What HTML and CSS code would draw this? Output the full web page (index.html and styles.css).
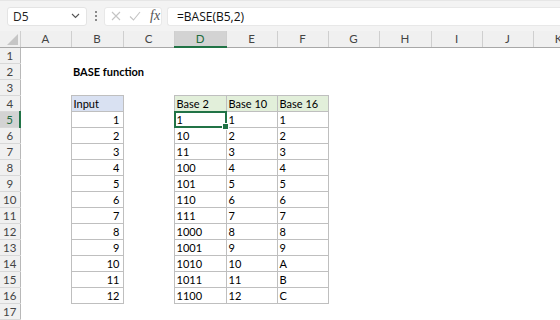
FILE: index.html
```html
<!DOCTYPE html>
<html>
<head>
<meta charset="utf-8">
<link rel="stylesheet" href="styles.css">
</head>
<body>
<div class="toolbar">
  <div class="namebox"><span>D5</span>
    <svg class="chev" width="9" height="6" viewBox="0 0 9 6"><path d="M1 1l3.5 3.5L8 1" fill="none" stroke="#555" stroke-width="1.1"/></svg>
  </div>
  <div class="dots"><i></i><i></i><i></i></div>
  <div class="fxbox">
    <svg width="10" height="10" viewBox="0 0 10 10"><path d="M1 1l8 8M9 1l-8 8" stroke="#c4c4c4" stroke-width="1.1" fill="none"/></svg>
    <svg width="12" height="10" viewBox="0 0 12 10"><path d="M1 5.5l3.5 3.5L11 1" stroke="#c4c4c4" stroke-width="1.1" fill="none"/></svg>
    <span class="fx">fx</span>
  </div>
  <div class="formula">=BASE(B5,2)</div>
</div>
<div class="sheet">
<table class="grid">
  <colgroup>
    <col class="c-rh"><col class="c51"><col class="c52"><col class="c51"><col class="c52"><col class="c51"><col class="c51"><col class="c51"><col class="c52"><col class="c51"><col class="c51"><col class="c51">
  </colgroup>
  <tr class="hdr">
    <td class="corner"><span class="tri"></span></td><td>A</td><td>B</td><td>C</td><td class="hsel">D</td><td>E</td><td>F</td><td>G</td><td>H</td><td>I</td><td>J</td><td>K</td>
  </tr>
  <tr><td class="rh">1</td><td></td><td></td><td></td><td></td><td></td><td></td><td></td><td></td><td></td><td></td><td></td></tr>
  <tr><td class="rh">2</td><td></td><td class="title">BASE function</td><td></td><td></td><td></td><td></td><td></td><td></td><td></td><td></td><td></td></tr>
  <tr><td class="rh">3</td><td></td><td></td><td></td><td></td><td></td><td></td><td></td><td></td><td></td><td></td><td></td></tr>
  <tr><td class="rh">4</td><td></td><td class="bx blue">Input</td><td></td><td class="bx green">Base 2</td><td class="bx green">Base 10</td><td class="bx green">Base 16</td><td></td><td></td><td></td><td></td><td></td></tr>
  <tr><td class="rh rsel">5</td><td></td><td class="bx num">1</td><td></td><td class="bx act">1<div class="sel"><span class="handle"></span></div></td><td class="bx">1</td><td class="bx">1</td><td></td><td></td><td></td><td></td><td></td></tr>
  <tr><td class="rh">6</td><td></td><td class="bx num">2</td><td></td><td class="bx">10</td><td class="bx">2</td><td class="bx">2</td><td></td><td></td><td></td><td></td><td></td></tr>
  <tr><td class="rh">7</td><td></td><td class="bx num">3</td><td></td><td class="bx">11</td><td class="bx">3</td><td class="bx">3</td><td></td><td></td><td></td><td></td><td></td></tr>
  <tr><td class="rh">8</td><td></td><td class="bx num">4</td><td></td><td class="bx">100</td><td class="bx">4</td><td class="bx">4</td><td></td><td></td><td></td><td></td><td></td></tr>
  <tr><td class="rh">9</td><td></td><td class="bx num">5</td><td></td><td class="bx">101</td><td class="bx">5</td><td class="bx">5</td><td></td><td></td><td></td><td></td><td></td></tr>
  <tr><td class="rh">10</td><td></td><td class="bx num">6</td><td></td><td class="bx">110</td><td class="bx">6</td><td class="bx">6</td><td></td><td></td><td></td><td></td><td></td></tr>
  <tr><td class="rh">11</td><td></td><td class="bx num">7</td><td></td><td class="bx">111</td><td class="bx">7</td><td class="bx">7</td><td></td><td></td><td></td><td></td><td></td></tr>
  <tr><td class="rh">12</td><td></td><td class="bx num">8</td><td></td><td class="bx">1000</td><td class="bx">8</td><td class="bx">8</td><td></td><td></td><td></td><td></td><td></td></tr>
  <tr><td class="rh">13</td><td></td><td class="bx num">9</td><td></td><td class="bx">1001</td><td class="bx">9</td><td class="bx">9</td><td></td><td></td><td></td><td></td><td></td></tr>
  <tr><td class="rh">14</td><td></td><td class="bx num">10</td><td></td><td class="bx">1010</td><td class="bx">10</td><td class="bx">A</td><td></td><td></td><td></td><td></td><td></td></tr>
  <tr><td class="rh">15</td><td></td><td class="bx num">11</td><td></td><td class="bx">1011</td><td class="bx">11</td><td class="bx">B</td><td></td><td></td><td></td><td></td><td></td></tr>
  <tr><td class="rh">16</td><td></td><td class="bx num">12</td><td></td><td class="bx">1100</td><td class="bx">12</td><td class="bx">C</td><td></td><td></td><td></td><td></td><td></td></tr>
  <tr><td class="rh">17</td><td></td><td></td><td></td><td></td><td></td><td></td><td></td><td></td><td></td><td></td><td></td></tr>
</table>
</div>
</body>
</html>
```
FILE: styles.css
```css
html, body {
  margin: 0;
  padding: 0;
  background: #fff;
}
body {
  width: 560px;
  height: 320px;
  overflow: hidden;
  font-family: Lato, "Liberation Sans", sans-serif;
}
.toolbar {
  display: flex;
  align-items: center;
  height: 31px;
  box-sizing: border-box;
  padding-left: 7px;
  background: #f3f3f3;
  border-top: 1px solid #e6e6e6;
}
.namebox {
  width: 80px;
  height: 19px;
  box-sizing: border-box;
  background: #fff;
  border: 1px solid #e4e4e4;
  border-radius: 3px;
  display: flex;
  align-items: center;
  justify-content: space-between;
  padding: 0 6px 0 5px;
  font: 12px "Open Sans", sans-serif;
  color: #222;
}
.dots {
  width: 17px;
  display: flex;
  flex-direction: column;
  align-items: center;
  gap: 2px;
}
.dots i {
  width: 2px;
  height: 2px;
  background: #8a8a8a;
}
.fxbox {
  width: 58px;
  height: 19px;
  box-sizing: border-box;
  background: #fff;
  border: 1px solid #e8e8e8;
  border-radius: 3px;
  display: flex;
  align-items: center;
  padding-left: 6px;
  gap: 8px;
}
.fx {
  font: italic 14px "Liberation Serif", serif;
  color: #555;
  margin-left: 1px;
}
.formula {
  flex: 1;
  height: 19px;
  margin-left: 5px;
  box-sizing: border-box;
  background: #fff;
  border: 1px solid #e8e8e8;
  border-right: 0;
  border-radius: 3px 0 0 3px;
  padding-left: 9px;
  font: 12px "Open Sans", sans-serif;
  line-height: 17px;
  color: #111;
}
.sheet {
  width: 560px;
  overflow: hidden;
}
.grid {
  border-collapse: collapse;
  table-layout: fixed;
  width: 584px;
}
.c-rh { width: 20px; }
.c51 { width: 51px; }
.c52 { width: 52px; }
.grid td {
  height: 15px;
  padding: 0 2px 0 2px;
  font-size: 11px;
  line-height: 15px;
  white-space: nowrap;
  color: #000;
  overflow: visible;
}
.hdr td {
  background: #f0f0f0;
  text-align: center;
  color: #444;
  font-size: 11.5px;
  border-right: 1px solid #cfcfcf;
  border-bottom: 1px solid #a8a8a8;
}
.hdr td.hsel {
  background: #d3d3d3;
  color: #1e6b40;
  border-bottom: 2px solid #217346;
}
.corner {
  position: relative;
}
.tri {
  position: absolute;
  right: 2px;
  bottom: 2px;
  width: 0;
  height: 0;
  border-left: 11px solid transparent;
  border-bottom: 11px solid #c6c6c6;
}
.grid td.rh {
  background: #f0f0f0;
  text-align: center;
  color: #444;
  font-size: 11.5px;
  padding: 0;
  border-right: 1px solid #b8b8b8;
  border-bottom: 1px solid #d8d8d8;
}
.grid td.rsel {
  background: #d3d3d3;
  color: #1e6b40;
  border-right: 2px solid #217346;
}
.title {
  font-weight: bold;
}
.bx {
  border: 1px solid #bfbfbf;
}
.blue {
  background: #d9e1f2;
}
.green {
  background: #e2efda;
}
.grid td.num {
  text-align: right;
  padding-right: 3px;
}
.act {
  position: relative;
}
.sel {
  position: absolute;
  left: -1px;
  top: -1px;
  right: -1px;
  bottom: -1px;
  border: 2px solid #217346;
}
.handle {
  position: absolute;
  right: -4px;
  bottom: -4px;
  width: 5px;
  height: 5px;
  background: #217346;
  border: 1px solid #fff;
}
```
